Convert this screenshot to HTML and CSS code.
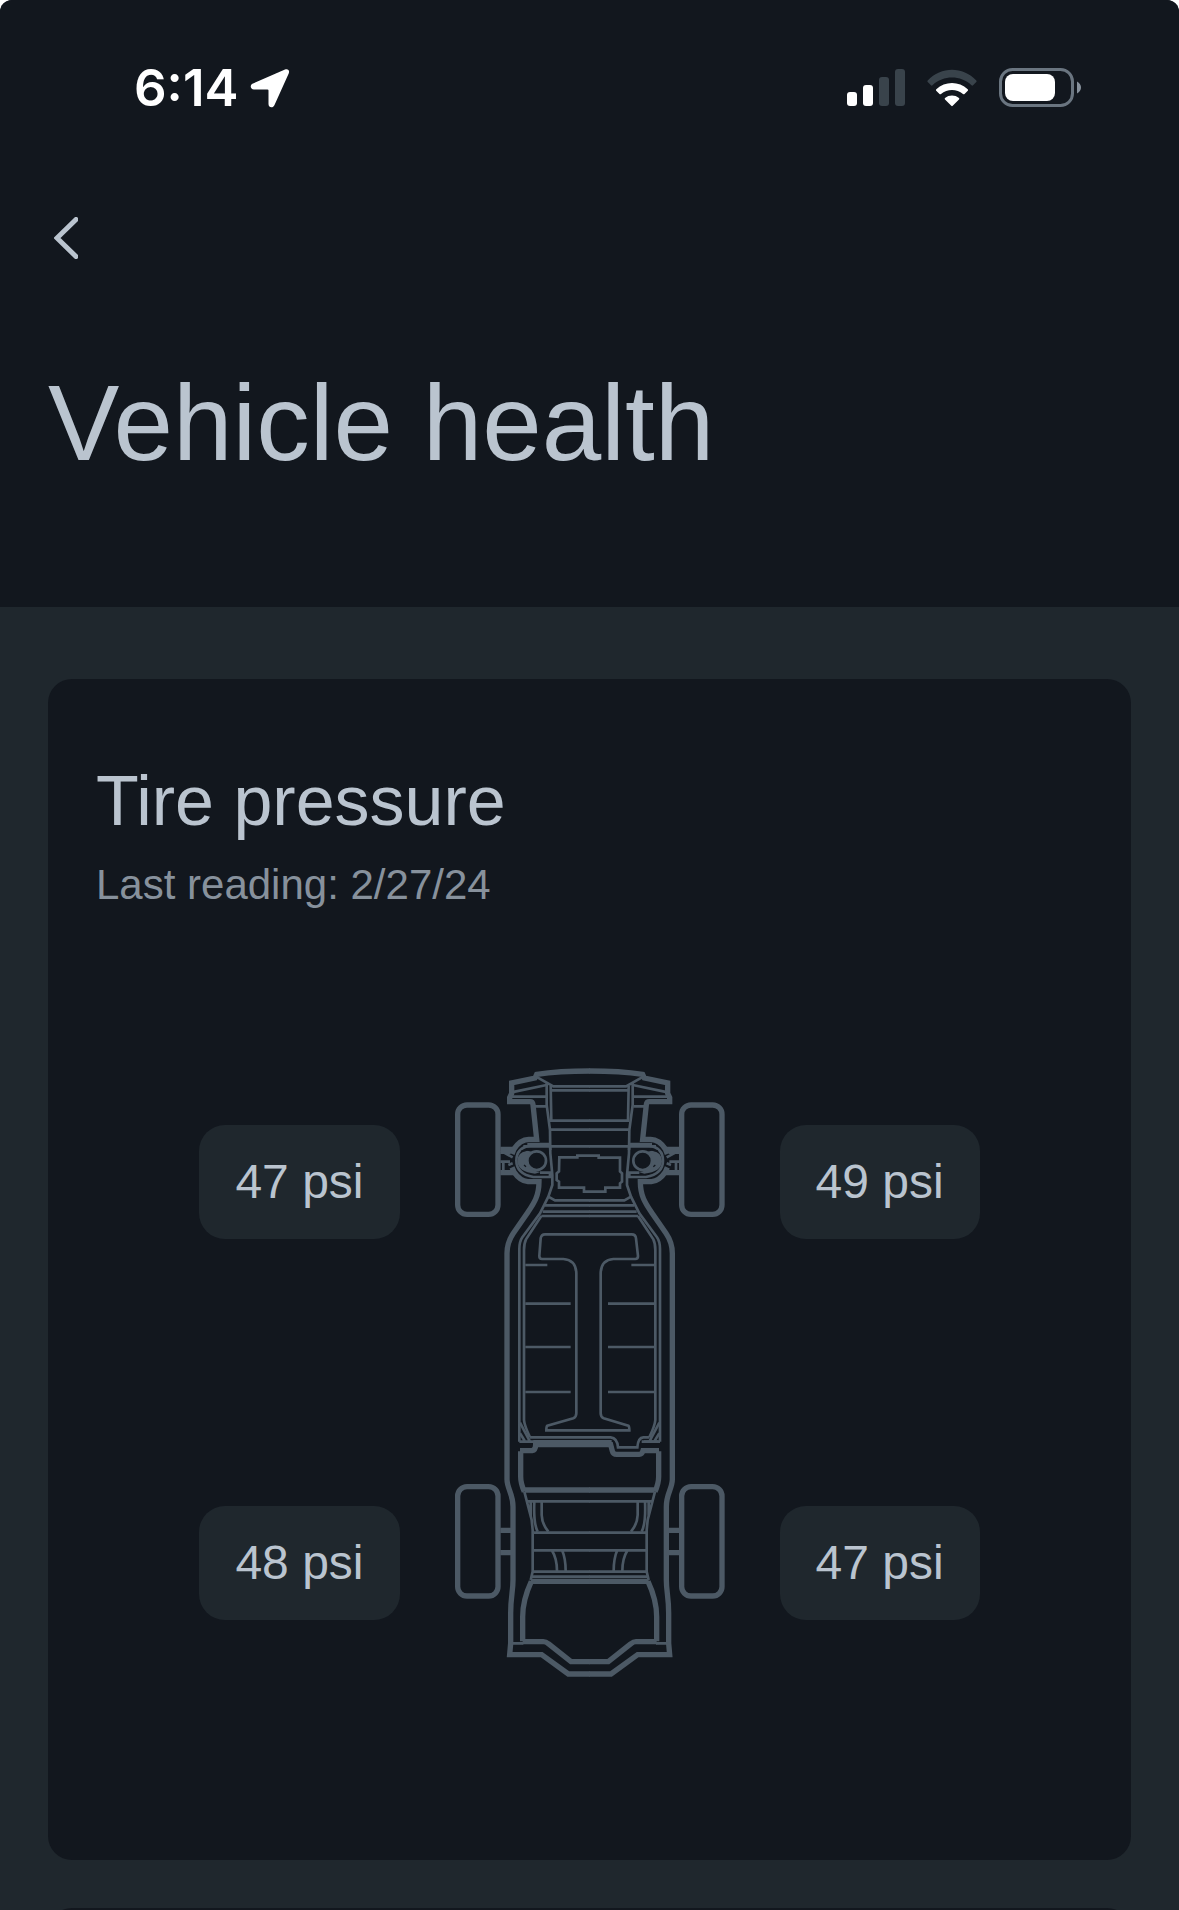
FILE: index.html
```html
<!DOCTYPE html>
<html lang="en">
<head>
  <meta charset="UTF-8">
  <meta name="viewport" content="width=device-width, initial-scale=1">
  <title>Vehicle health</title>
  <link rel="stylesheet" href="styles.css">
</head>
<body>
  <div class="screen">
    <header class="header">
      <div class="status-bar">
        <div class="status-left">
          <span class="time">6:14</span>
          <svg class="location" viewBox="0 0 40 40" aria-hidden="true">
            <path d="M35 1.500 3 15.500C-.5 17 .2 21.500 4 21.500H17.500Q18.500 21.500 18.500 22.500V36C18.500 39.800 23 40.500 24.500 37L38.700 5.500C40 2.500 38 .3 35 1.500Z"/>
          </svg>
        </div>
        <div class="status-right">
          <svg class="signal" viewBox="0 0 58 38" aria-hidden="true">
            <rect x="0" y="23" width="10" height="14" rx="3"/>
            <rect x="16" y="16" width="10" height="21" rx="3"/>
            <rect class="dim" x="32" y="8" width="10" height="29" rx="3"/>
            <rect class="dim" x="48" y="0" width="10" height="37" rx="3"/>
          </svg>
          <svg class="wifi" viewBox="0 0 50 38" aria-hidden="true">
            <path class="dim" d="M.7 11.500C14-2.800 36-2.800 49.300 11.500Q50 12.300 49.300 13L46 16.300Q45.300 17 44.500 16.200C33.500 6 16.500 6 5.500 16.200Q4.700 17 4 16.300L.7 13Q0 12.300 .7 11.500Z"/>
            <path d="M9.300 20.300C18 12 32 12 40.700 20.300Q41.500 21 40.800 21.800L37.500 25Q36.800 25.700 36 25C29.800 19.500 20.200 19.500 14 25Q13.200 25.700 12.500 25L9.200 21.800Q8.500 21 9.300 20.300Z"/>
            <path d="M18 29C22 25.700 28 25.700 32 29Q32.700 29.700 32 30.400L25.700 36.800Q25 37.500 24.300 36.800L18 30.400Q17.300 29.700 18 29Z"/>
          </svg>
          <svg class="battery" viewBox="0 0 82 40" aria-hidden="true">
            <rect class="battery-case" x="1.500" y="1.500" width="72" height="36" rx="12"/>
            <rect x="6" y="6" width="50" height="27" rx="8"/>
            <path class="battery-cap" d="M78 13.500Q82 16 82 19.500T78 25.500Z"/>
          </svg>
        </div>
      </div>
      <button class="back" type="button" aria-label="Back">
        <svg viewBox="0 0 24 42" aria-hidden="true"><path d="M22 2.500 3 21 22 39.500"/></svg>
      </button>
      <h1>Vehicle health</h1>
    </header>

    <main class="content">
      <section class="card">
        <h2>Tire pressure</h2>
        <p class="reading">Last reading: 2/27/24</p>
        <div class="diagram">
          <div class="tires">
            <span class="psi">47 psi</span>
            <span class="psi">48 psi</span>
          </div>
          <svg class="chassis" viewBox="42 51 816 1830" aria-hidden="true">
            <!-- wheels -->
            <g class="thick">
              <rect x="53" y="165" width="121" height="328" rx="28"/>
              <rect x="725" y="165" width="121" height="328" rx="28"/>
              <rect x="53" y="1310" width="121" height="328" rx="28"/>
              <rect x="725" y="1310" width="121" height="328" rx="28"/>
            </g>
            <!-- everything that is the same on both sides -->
            <g id="side">
              <g class="thick">
                <path d="M450 63C385 63 330 67 290 73L285 84 215 99V130L209 143V155H270Q278 155 279 164L290 268H266Q240 269 222 297L216 312"/>
                <path d="M216 352 222 366Q240 393 264 395H297C297 440 280 462 260 492L220 550Q201 578 201 610V1288C201 1316 219 1330 219 1370V1590C219 1625 212 1640 212 1690V1780L209 1814H305L385 1872H450"/>
                <path d="M181 298H222M181 368H222M181 1441H219M181 1508H219"/>
                <path d="M242 1204V1280Q242 1300 253 1325M255 1320H450M272 1594H450M274 1594Q248 1650 248 1700V1774M248 1775H310Q318 1775 325 1781L393 1835H450"/>
              </g>
              <g class="thin">
                <path d="M288 80 340 109H450M320 95V165L330 240 331 310 337 375V405L325 440 300 490 247 562Q238 575 238 597V1175"/>
                <path d="M214 127 320 105M209 140H320M280 169H318"/>
                <path d="M332 108 334 212M334 121H450M330 212H450M328 239H450M250 289H450M262 282H330"/>
                <path d="M325 440 345 451H450M315 466H450M308 485H450M304 498H450M304 498 258 568Q252 580 252 600V1110Q253 1126 270 1162"/>
                <path d="M330 287H272Q229 293 229 332T280 381H330V368H300M330 287 331 300"/>
                <path d="M181 308H212M181 335H210M190 335V368M192 308 218 322M205 345 218 340"/>
                <path d="M240 1118 270 1175M240 1150 254 1172M238 1175H286"/>
                <path d="M253 1325 275 1410 278 1440V1565L272 1590M260 1354H450M272 1354V1400M283 1354Q280 1420 293 1445M305 1354V1395Q306 1422 325 1445"/>
                <path d="M280 1448H450M278 1501H450M335 1500Q351 1525 351 1563M366 1500Q377 1525 377 1563M278 1565H450M276 1580H450M215 1780H250"/>
              </g>
              <circle class="hub" cx="290" cy="332" r="28"/>
              <path class="fill" d="M262 302Q232 306 232 334 234 366 285 371L302 366Q262 362 262 330Q264 315 276 305Z"/>
              <path class="gap" d="M244 303 274 298M252 345 258 350"/>
            </g>
            <use href="#side" transform="matrix(-1 0 0 1 898 0)"/>
            <!-- motor and battery pack -->
            <g class="thin">
              <path d="M358 322H412V317H476V323H540V364L546 370V395L540 400V413H496V425H432V413H357V395L350 390V370L357 364Z"/>
              <path d="M315 553H575Q587 553 588 565L594 618Q594 627 586 627H520Q483 630 482 670V1090Q482 1101 491 1105L565 1127Q568 1129 568 1141H319Q319 1129 322 1127L400 1105Q409 1101 409 1090V670Q408 630 370 627H306Q298 627 298 618L302 565Q304 553 315 553Z"/>
              <path d="M256 645H322M256 761H392M256 891H392M256 1026H392M574 645H642M504 761H642M504 891H642M504 1026H642"/>
              <path d="M270 1162H512Q532 1164 534 1192H592Q594 1163 610 1162H628"/>
              <path d="M280 1174H515M605 1175H655"/>
            </g>
            <path class="thick" d="M240 1202H276Q287 1200 287 1184H512L517 1203Q519 1213 530 1213H598Q606 1213 609 1202H657"/>
          </svg>
          <div class="tires">
            <span class="psi">49 psi</span>
            <span class="psi">47 psi</span>
          </div>
        </div>
      </section>
      <section class="card"></section>
    </main>
  </div>
</body>
</html>
```
FILE: styles.css
```css
* {
  box-sizing: border-box;
}
body {
  margin: 0;
  background: #fff;
  color: #bac4cf;
  font-family: "Liberation Sans", Arial, sans-serif;
}
.screen {
  height: 100vh;
  display: flex;
  flex-direction: column;
  overflow: hidden;
  background: #1f272d;
  border-radius: 12px 12px 0 0;
}
.header {
  background: #12171e;
  padding: 58px 48px 124px;
}
.status-bar {
  display: flex;
  justify-content: space-between;
  align-items: center;
  height: 60px;
  padding: 0 50px 0 86px;
}
.status-left,
.status-right {
  display: flex;
  align-items: center;
}
.status-left {
  gap: 12px;
}
.status-right {
  gap: 22px;
}
.time {
  font-family: Inter, sans-serif;
  font-size: 51px;
  font-weight: 600;
  line-height: 60px;
  color: #fff;
}
.location {
  width: 40px;
  height: 40px;
  fill: #fff;
}
.signal,
.wifi,
.battery {
  height: 38px;
  fill: #fff;
}
.signal {
  width: 58px;
}
.wifi {
  width: 50px;
}
.battery {
  width: 82px;
  height: 40px;
}
.dim {
  fill: #39434b;
}
.battery-case {
  fill: none;
  stroke: #6a7580;
  stroke-width: 3;
}
.battery-cap {
  fill: #87919c;
}
.back {
  display: block;
  margin: 99px 0 0;
  padding: 0 6px;
  border: none;
  background: none;
  cursor: pointer;
}
.back svg {
  display: block;
  width: 24px;
  height: 42px;
  fill: none;
  stroke: #bac4cf;
  stroke-width: 5;
  stroke-linecap: round;
}
h1 {
  margin: 104px 0 0;
  font-size: 107px;
  font-weight: 400;
  line-height: 120px;
}
.content {
  padding: 72px 48px 0;
  display: flex;
  flex-direction: column;
  gap: 48px;
}
.card {
  background: #12171e;
  border-radius: 24px;
  padding: 82px 48px 183px;
}
h2 {
  margin: 0;
  font-size: 70px;
  font-weight: 400;
  line-height: 80px;
}
.reading {
  margin: 20px 0 0;
  font-size: 42px;
  line-height: 48px;
  color: #87919c;
}
.diagram {
  display: flex;
  justify-content: center;
  gap: 54px;
  margin-top: 158px;
}
.tires {
  display: flex;
  flex-direction: column;
  justify-content: space-between;
  align-items: center;
  padding: 58px 0 57px;
}
.psi {
  padding: 28px 36px;
  border-radius: 26px;
  background: #1f272d;
  font-size: 48px;
  line-height: 58px;
}
.chassis {
  width: 272px;
  height: 610px;
  fill: none;
  stroke: #4c5965;
}
.thick {
  stroke-width: 16px;
}
.thin {
  stroke-width: 8px;
}
.hub {
  stroke-width: 8px;
}
.fill {
  fill: #4c5965;
  stroke: none;
}
.gap {
  stroke: #12171e;
  stroke-width: 4px;
}
```
